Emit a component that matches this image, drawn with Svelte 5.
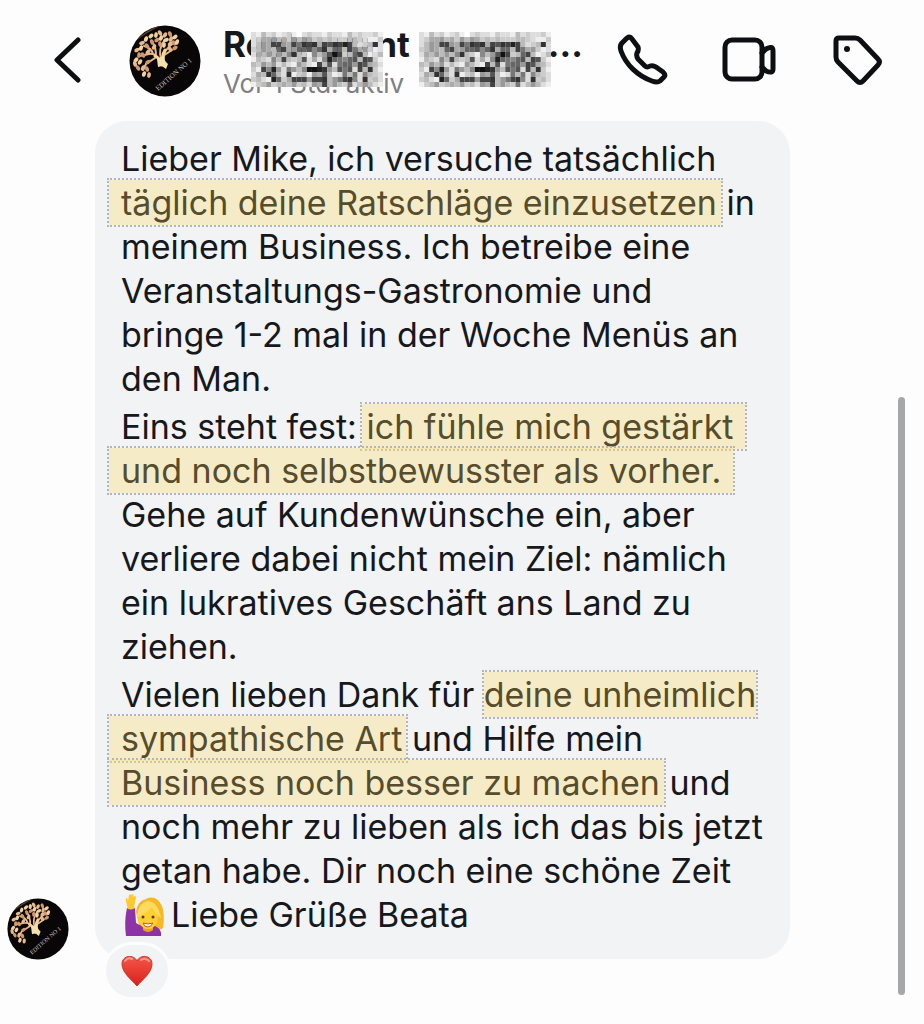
<script lang="ts">
  type Part = { text: string; mark?: string };

  const paragraphs: Part[][][] = [
    [
      [{ text: 'Lieber Mike, ich versuche tatsächlich' }],
      [{ text: 'täglich deine Ratschläge einzusetzen', mark: 'lead' }, { text: ' in' }],
      [{ text: 'meinem Business. Ich betreibe eine' }],
      [{ text: 'Veranstaltungs-Gastronomie und' }],
      [{ text: 'bringe 1-2 mal in der Woche Menüs an' }],
      [{ text: 'den Man.' }],
    ],
    [
      [{ text: 'Eins steht fest: ' }, { text: 'ich fühle mich gestärkt', mark: 'trail' }],
      [{ text: 'und noch selbstbewusster als vorher.', mark: 'lead trail' }],
      [{ text: 'Gehe auf Kundenwünsche ein, aber' }],
      [{ text: 'verliere dabei nicht mein Ziel: nämlich' }],
      [{ text: 'ein lukratives Geschäft ans Land zu' }],
      [{ text: 'ziehen.' }],
    ],
    [
      [{ text: 'Vielen lieben Dank für ' }, { text: 'deine unheimlich', mark: 'tight' }],
      [{ text: 'sympathische Art', mark: 'lead' }, { text: ' und Hilfe mein' }],
      [{ text: 'Business noch besser zu machen', mark: 'lead' }, { text: ' und' }],
      [{ text: 'noch mehr zu lieben als ich das bis jetzt' }],
      [{ text: 'getan habe. Dir noch eine schöne Zeit' }],
    ],
  ];

  // one hex digit per cell, 0 = black, f = white
  const mosaic = [
    'debdcedcefdcddecddebdcddce',
    'dcaa9bac9b9acbcbcccbbcdeec',
    'db9a449a47343a453424bdcb3d',
    'cb9ab64a9665863a66b47a9ced',
    'dab9b9b83bce8b9514cb64bedb',
    'ebcd8b4bcb5dad8267865b45ce',
    'bc9b9dbde9bde4b5d766945abd',
    'ce4829d79b811239b575d4b3ce',
    'dab36bd3ecbe9a5bed7b7d8bcd',
    'cbde26ca4449443b97438d3cbd',
    'ecb9cbab9cbd9a4b9bc7db9bde',
  ];

  const leaves = [
    [7, 35, 40], [10, 30, 10], [6, 39, -20], [11, 37, 30], [9, 43, -30], [14, 43, 20],
    [15, 49, 20], [18, 44, -20], [8, 25, 60], [12, 23, 20], [14, 30, -30], [13, 18, 70],
    [17, 14, 20], [18, 21, -30], [19, 27, 40], [22, 11, 50], [23, 17, -20], [25, 22, 30],
    [27, 10, 10], [28, 15, 60], [31, 8, -30], [32, 13, 20], [31, 19, -10], [36, 10, 30],
    [37, 15, 70], [41, 9, -20], [42, 14, 20], [46, 12, 50], [45, 18, -40], [41, 19, 30],
    [48, 17, 20], [46, 23, 60], [41, 24, -30], [35, 20, 10], [19, 37, 60], [20, 50, 10],
  ];
</script>

{#snippet avatar()}
  <svg viewBox="0 0 72 72" role="img" aria-label="Edition No 1">
    <circle cx="36" cy="36" r="35.5" fill="#080606" />
    <path d="M7 16Q17 4 31 1Q15 9 7 16Z" fill="#5c4429" />
    <g fill="none" stroke="#e5b985" stroke-linecap="round">
      <path d="M31 38C30 31 25 28 20 29L11 31M24 29C23 25 19 22 15 21M27 31C27 23 26 20 23 17M32 34C30 27 32 20 35 16M34 36C34 27 38 22 45 18M34 31L43 25M26 33L17 39L14 45" stroke-width="2" />
      <path d="M26 31Q32 34 33 40M36 25Q32 31 35 39" stroke="#f2d5a0" stroke-width="3" />
    </g>
    <path d="M28 34L36 30Q34 35 39 39L37 44L33 41L29 42Z" fill="#f4dfae" />
    {#each leaves as [x, y, angle], i}
      <ellipse cx={x} cy={y} rx="1.9" ry="2.9" transform={`rotate(${angle} ${x} ${y})`} fill={['#efd2a0', '#cf9872', '#e8b98d'][i % 3]} />
    {/each}
    <text x="29" y="66" transform="rotate(-41 29 66)" class="edition">EDITION NO 1</text>
  </svg>
{/snippet}

{#snippet pixels()}
  <svg class="pixels" viewBox="0 0 26 11" preserveAspectRatio="none" aria-hidden="true">
    {#each mosaic as row, y}
      {#each row as level, x}
        <rect {x} {y} width="1" height="1" fill={`#${level}${level}${level}`} />
      {/each}
    {/each}
  </svg>
{/snippet}

<div class="chat">
  <header>
    <button class="back" aria-label="Zurück">
      <svg width="28" height="48" viewBox="0 0 28 48">
        <path d="M25 3L4 23L25 43" />
      </svg>
    </button>
    <div class="photo">{@render avatar()}</div>
    <div class="contact">
      <h1><span>Restaurant</span><span class="rest">...</span></h1>
      <p>Vor 1 Std. aktiv</p>
      <div class="cover">
        {@render pixels()}
        {@render pixels()}
      </div>
    </div>
    <nav>
      <button aria-label="Anrufen">
        <svg width="56" height="56" viewBox="0 0 56 56">
          <path d="M9 9L13 5Q16 3 18 6L24 14Q25 17 23 20Q22 23 24 26L31 33Q33 35 36 33Q39 32 42 34L49 39Q52 42 50 44L46 48Q43 50 38 48C24 43 12 32 7 18Q5 12 9 9Z" />
        </svg>
      </button>
      <button aria-label="Videoanruf">
        <svg width="56" height="56" viewBox="0 0 56 56">
          <rect x="3" y="7" width="37" height="39" rx="7" />
          <path d="M40 20L44 16Q51 12 51 18V36Q51 41 44 38L40 34" />
        </svg>
      </button>
      <button aria-label="Label">
        <svg width="56" height="56" viewBox="0 0 56 56">
          <path d="M9 5H25Q28 5 30 7L48 26Q51 29 48 32L33 48Q30 51 27 48L8 29Q6 27 6 24V8Q6 5 9 5Z" />
          <circle cx="17" cy="16" r="3" class="dot" />
        </svg>
      </button>
    </nav>
  </header>

  <main>
    <div class="sender">{@render avatar()}</div>
    <article>
      <div class="bubble">
        {#each paragraphs as lines, i}
          <p>
            {#each lines as parts}
              <span class="line">{#each parts as part}{#if part.mark}<mark class={part.mark}>{part.text}</mark>{:else}{part.text}{/if}{/each}</span>
            {/each}
            {#if i === paragraphs.length - 1}
              <span class="line closing">
                <svg width="46" height="44" viewBox="0 0 46 44" role="img" aria-label="Frau hebt die Hand">
                  <path d="M15 19Q16 8 25 6Q35 1 41 13Q44 22 42 35Q36 40 19 36Z" fill="#f6b925" />
                  <path d="M7 17L5 8Q4 5 6 5L7 8L8 2Q10 0 10 3L11 1Q13 1 12 4L14 3Q16 4 14 8L13 17Z" fill="#ffc92d" />
                  <path d="M6 15Q9 18 14 15L15 30Q24 36 34 33Q41 36 40 43H5Q3 28 6 15Z" fill="#8e32a8" />
                  <path d="M22 31H32V37Q27 41 22 37Z" fill="#e9a21a" />
                  <ellipse cx="27" cy="24" rx="10" ry="12" fill="#ffcf32" />
                  <path d="M16 24Q17 10 27 8Q37 9 40 25Q34 21 31 14Q25 21 16 24Z" fill="#fbdc5f" />
                  <circle cx="22" cy="24" r="1.5" fill="#5d3812" />
                  <circle cx="32" cy="24" r="1.5" fill="#5d3812" />
                  <path d="M22 30Q27 32 32 30Q30 34 27 34Q23 34 22 30Z" fill="#fff" stroke="#b65c20" />
                </svg>
                <span>Liebe Grüße Beata</span>
              </span>
            {/if}
          </p>
        {/each}
      </div>
      <button class="reaction" aria-label="Herz-Reaktion">
        <svg width="34" height="32" viewBox="0 0 34 32">
          <defs>
            <linearGradient id="heart" x1="0" y1="0" x2="0" y2="1">
              <stop offset="0" stop-color="#f4574a" />
              <stop offset="1" stop-color="#d81f18" />
            </linearGradient>
          </defs>
          <path d="M17 31C12 25 2 18 2 9C2 0 14 -1 17 6C20 -1 32 0 32 9C32 18 22 25 17 31Z" fill="url(#heart)" stroke="#c9382d" />
          <path d="M5 6Q8 2 12 4M21 5Q25 2 29 6" fill="none" stroke="#ff9b8c" stroke-width="2" stroke-linecap="round" />
        </svg>
      </button>
    </article>
    <div class="thumb"></div>
  </main>
</div>

<style>
  :global(body) {
    margin: 0;
    background: #fdfdfd;
  }

  .chat {
    min-height: 100vh;
    display: flex;
    flex-direction: column;
    color: #16181c;
    font-family: Inter, "Liberation Sans", sans-serif;
    overflow: hidden;
  }

  header {
    height: 121px;
    box-sizing: border-box;
    padding: 0 38px 0 53px;
    display: flex;
    align-items: center;
    flex: none;
  }

  button {
    padding: 0;
    border: 0;
    background: none;
    color: inherit;
    cursor: pointer;
  }

  svg {
    display: block;
  }

  header button svg {
    fill: none;
    stroke: #0d0f13;
    stroke-width: 5;
    stroke-linecap: round;
    stroke-linejoin: round;
  }

  header .dot {
    fill: #0d0f13;
    stroke: none;
  }

  .photo {
    width: 72px;
    flex: none;
    margin: 0 22px 0 48px;
  }

  .edition {
    fill: #c9c1b7;
    font: 7px "Liberation Serif", serif;
  }

  .contact {
    position: relative;
    flex: 1;
    min-width: 0;
    padding-top: 6px;
    white-space: nowrap;
  }

  h1 {
    margin: 0;
    display: flex;
    font-size: 35px;
    line-height: 40px;
    font-weight: 700;
  }

  .rest {
    margin-left: 138px;
  }

  .contact p {
    margin: 0;
    color: #7d7f83;
    font-size: 26px;
    line-height: 40px;
  }

  .cover {
    position: absolute;
    top: 14px;
    left: 28px;
    display: flex;
    gap: 36px;
  }

  .pixels {
    width: 132px;
    height: 55px;
  }

  nav {
    display: flex;
    gap: 52px;
  }

  main {
    flex: 1;
    display: flex;
    align-items: flex-end;
  }

  .sender {
    width: 62px;
    flex: none;
    margin: 0 26px 64px 7px;
  }

  article {
    position: relative;
    width: 695px;
    align-self: flex-start;
  }

  .bubble {
    padding: 16px 26px 22px;
    border-radius: 32px;
    background: #f1f3f5;
    font-size: 34px;
    line-height: 44px;
    white-space: nowrap;
  }

  .bubble p {
    margin: 0 0 4px;
  }

  .bubble p:last-child {
    margin: 0;
  }

  .line {
    display: block;
  }

  mark {
    padding: 2px 4px;
    margin: 0 -6px;
    border: 2px dotted #b5b5b8;
    background: rgba(252, 226, 130, 0.4);
    background-clip: padding-box;
    color: #574c2b;
  }

  mark.lead {
    padding-left: 12px;
    margin-left: -14px;
  }

  mark.trail {
    padding-right: 12px;
  }

  mark.tight {
    padding: 2px 0;
    margin: 0 -2px;
  }

  .closing {
    display: flex;
    align-items: center;
    gap: 4px;
  }

  .reaction {
    position: absolute;
    left: 8px;
    bottom: -41px;
    width: 68px;
    height: 58px;
    display: grid;
    place-items: center;
    border: 3px solid #fdfdfd;
    border-radius: 29px;
    background: #f1f3f5;
  }

  .thumb {
    width: 7px;
    height: 598px;
    flex: none;
    margin: 0 19px 29px auto;
    border-radius: 4px;
    background: #a6a7a8;
  }
</style>
